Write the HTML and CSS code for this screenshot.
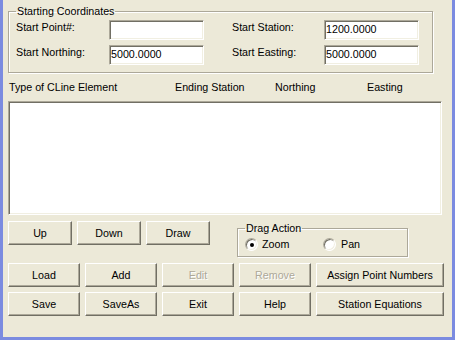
FILE: index.html
```html
<!DOCTYPE html>
<html>
<head>
<meta charset="utf-8">
<link rel="stylesheet" href="styles.css">
</head>
<body>
<div class="window">
  <fieldset class="group coords">
    <legend>Starting Coordinates</legend>
    <div class="coord-grid">
      <span class="lbl">Start Point#:</span>
      <div class="field"></div>
      <span></span>
      <span class="lbl">Start Station:</span>
      <div class="field">1200.0000</div>
      <span class="lbl">Start Northing:</span>
      <div class="field">5000.0000</div>
      <span></span>
      <span class="lbl">Start Easting:</span>
      <div class="field">5000.0000</div>
    </div>
  </fieldset>

  <div class="headers">
    <span>Type of CLine Element</span>
    <span>Ending Station</span>
    <span>Northing</span>
    <span>Easting</span>
  </div>

  <div class="listbox"></div>

  <div class="row row1">
    <button class="btn w64">Up</button>
    <button class="btn w64">Down</button>
    <button class="btn w64">Draw</button>
    <fieldset class="group drag">
      <legend>Drag Action</legend>
      <div class="radios">
        <label class="radio-item"><span class="radio checked"></span>Zoom</label>
        <label class="radio-item pan"><span class="radio"></span>Pan</label>
      </div>
    </fieldset>
  </div>

  <div class="row row2">
    <button class="btn w72">Load</button>
    <button class="btn w72">Add</button>
    <button class="btn w72 disabled">Edit</button>
    <button class="btn w72 disabled">Remove</button>
    <button class="btn w128">Assign Point Numbers</button>
  </div>

  <div class="row row3">
    <button class="btn w72">Save</button>
    <button class="btn w72">SaveAs</button>
    <button class="btn w72">Exit</button>
    <button class="btn w72">Help</button>
    <button class="btn w128">Station Equations</button>
  </div>
</div>
</body>
</html>
```

FILE: styles.css
```css
html, body {
  margin: 0;
  padding: 0;
  background: #ece9d8;
}

.window {
  width: 455px;
  height: 340px;
  box-sizing: border-box;
  background: #ece9d8;
  border-left: 3px solid #7b8be0;
  border-right: 3px solid #7b8be0;
  border-bottom: 3px solid #7b8be0;
  padding: 5px 0 0 5px;
  font-family: "Liberation Sans", Arial, sans-serif;
  font-size: 10.7px;
  line-height: 13px;
  color: #000;
}

.group {
  margin: 0;
  border: 1px solid #aca899;
  box-shadow: 1px 1px 0 #fff, inset 1px 1px 0 #fff;
  min-width: 0;
}

.group legend {
  padding: 0 1px;
  margin: 0;
  font-size: 10.7px;
  line-height: 13px;
}

.coords {
  width: 425px;
  box-sizing: border-box;
  padding: 2px 0 7px 7px;
}

.coord-grid {
  display: grid;
  grid-template-columns: 93px 95px 28px 92px 95px;
  grid-auto-rows: 20px;
  row-gap: 5px;
}

.lbl {
  margin-top: 1px;
  white-space: nowrap;
}

.field {
  box-sizing: border-box;
  height: 20px;
  background: #fff;
  border: 1px solid;
  border-color: #aca899 #fff #fff #aca899;
  box-shadow: inset 1px 1px 0 #716f64, inset -1px -1px 0 #f1efe2;
  padding: 2px 1px 0 1px;
  line-height: 13px;
}

.headers {
  display: grid;
  grid-template-columns: 166px 100px 92px auto;
  margin-top: 8px;
  padding-left: 1px;
  height: 13px;
}

.listbox {
  margin-top: 7px;
  width: 434px;
  height: 114px;
  box-sizing: border-box;
  background: #fff;
  border: 1px solid;
  border-color: #aca899 #fff #fff #aca899;
  box-shadow: inset 1px 1px 0 #716f64, inset -1px -1px 0 #f1efe2;
}

.row {
  display: flex;
  align-items: flex-start;
  gap: 5px;
}

.row1 { margin-top: 6px; }
.row2 { margin-top: 6px; }
.row3 { margin-top: 5px; }

.btn {
  box-sizing: border-box;
  height: 24px;
  margin: 0;
  padding: 0;
  background: #ece9d8;
  font-family: "Liberation Sans", Arial, sans-serif;
  font-size: 10.7px;
  font-weight: normal;
  line-height: 13px;
  color: #000;
  border: 1px solid;
  border-color: #fff #716f64 #716f64 #fff;
  box-shadow: inset -1px -1px 0 #aca899;
  white-space: nowrap;
}

.w64 { width: 64px; }
.w72 { width: 72px; }
.w128 { width: 128px; }

.btn.disabled {
  color: #aca899;
  text-shadow: 1px 1px 0 #fff;
}

.drag {
  width: 171px;
  box-sizing: border-box;
  margin-left: 22px;
  margin-top: 1px;
  padding: 3px 0 5px 7px;
}

.radios {
  display: flex;
  height: 13px;
}

.radio-item {
  display: flex;
  align-items: center;
  gap: 4px;
  width: 78px;
}

.radio-item.pan {
  gap: 5px;
}

.radio {
  position: relative;
  width: 13px;
  height: 13px;
  box-sizing: border-box;
  border-radius: 50%;
  background: #fff;
  border: 1px solid;
  border-color: #aca899 #fff #fff #aca899;
  box-shadow: inset 1px 1px 0 #716f64, inset -1px -1px 0 #f1efe2;
}

.radio.checked::after {
  content: "";
  position: absolute;
  left: 3.5px;
  top: 3.5px;
  width: 4px;
  height: 4px;
  border-radius: 50%;
  background: #000;
}
```
